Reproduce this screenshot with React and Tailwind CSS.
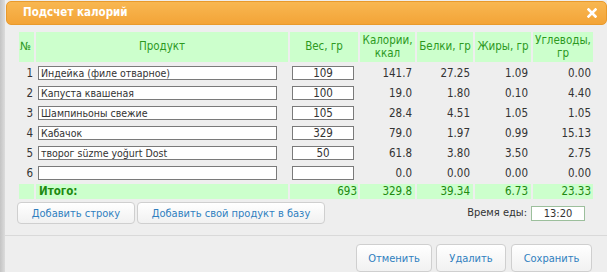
import React from "react";

const rows = [
  { n: 1, name: "Индейка (филе отварное)", w: "109", k: "141.7", b: "27.25", f: "1.09", c: "0.00" },
  { n: 2, name: "Капуста квашеная", w: "100", k: "19.0", b: "1.80", f: "0.10", c: "4.40" },
  { n: 3, name: "Шампиньоны свежие", w: "105", k: "28.4", b: "4.51", f: "1.05", c: "1.05" },
  { n: 4, name: "Кабачок", w: "329", k: "79.0", b: "1.97", f: "0.99", c: "15.13" },
  { n: 5, name: "творог süzme yoğurt Dost", w: "50", k: "61.8", b: "3.80", f: "3.50", c: "2.75" },
  { n: 6, name: "", w: "", k: "0.0", b: "0.00", f: "0.00", c: "0.00" },
];

function Btn({ children, className = "" }) {
  return (
    <button
      className={
        "rounded-[4px] border border-[#cfcfcf] bg-gradient-to-b from-[#ffffff] to-[#f1f1f1] text-[#2f7fbf] leading-none " +
        className
      }
    >
      {children}
    </button>
  );
}

export default function App() {
  return (
    <div
      className="w-[607px] h-[272px] flex overflow-hidden bg-[#eeeeee] text-[#333333]"
      style={{ fontFamily: '"DejaVu Sans Condensed", "DejaVu Sans", sans-serif' }}
    >
      <div className="w-[5px] h-full bg-gradient-to-r from-[#c4c4c4] to-[#dcdcdc] shrink-0" />
      <div className="flex-1 flex flex-col">
        <div className="mt-[1px] ml-[1px] h-[25px] rounded-[5px] border border-[#e99a2c] bg-gradient-to-b from-[#f8b751] to-[#f3a437] flex items-center justify-between pl-[16px] pr-[9px]">
          <span className="text-white font-bold text-[11.5px]">Подсчет калорий</span>
          <svg width="10" height="10" viewBox="0 0 10 10">
            <path d="M1.5 1.5 L8.5 8.5 M8.5 1.5 L1.5 8.5" stroke="#ffffff" strokeWidth="2.6" strokeLinecap="square" />
          </svg>
        </div>

        <div className="pl-[12px] mt-[5px]">
          <table className="table-fixed border-separate border-spacing-[2px] text-[11.5px]">
            <thead>
              <tr className="text-[#2d9a1f] h-[30px]">
                <th className="w-[15px] bg-[#ccffcc] font-normal text-left pl-[1px]">№</th>
                <th className="w-[252px] bg-[#ccffcc] font-normal">Продукт</th>
                <th className="w-[68px] bg-[#ccffcc] font-normal">Вес, гр</th>
                <th className="w-[55px] bg-[#ccffcc] font-normal leading-[13px]">Калории,<br />ккал</th>
                <th className="w-[56px] bg-[#ccffcc] font-normal">Белки, гр</th>
                <th className="w-[56px] bg-[#ccffcc] font-normal">Жиры, гр</th>
                <th className="w-[60px] bg-[#ccffcc] font-normal leading-[13px]">Углеводы,<br />гр</th>
              </tr>
            </thead>
            <tbody>
              {rows.map((r) => (
                <tr key={r.n} className="h-[18px] leading-[14px]">
                  <td className="text-right pr-[1px] p-0">{r.n}</td>
                  <td className="p-0 pl-[2px]">
                    <div className="w-[239px] h-[14px] border border-[#7a7a7a] bg-white text-[10.5px] leading-[12px] pl-[2px] whitespace-nowrap overflow-hidden">
                      {r.name}
                    </div>
                  </td>
                  <td className="p-0 pl-[2px]">
                    <div className="w-[62px] h-[14px] border border-[#7a7a7a] bg-white leading-[12px] text-center">
                      {r.w}
                    </div>
                  </td>
                  <td className="p-0 pr-[3px] text-right">{r.k}</td>
                  <td className="p-0 pr-[3px] text-right">{r.b}</td>
                  <td className="p-0 pr-[3px] text-right">{r.f}</td>
                  <td className="p-0 pr-[2px] text-right">{r.c}</td>
                </tr>
              ))}
              <tr className="h-[15px] text-[#208a10] leading-[13px]">
                <td className="bg-[#ccffcc] p-0"></td>
                <td className="bg-[#ccffcc] p-0 pl-[3px] font-bold">Итого:</td>
                <td className="bg-[#ccffcc] p-0 pr-[1px] text-right">693</td>
                <td className="bg-[#ccffcc] p-0 pr-[3px] text-right">329.8</td>
                <td className="bg-[#ccffcc] p-0 pr-[3px] text-right">39.34</td>
                <td className="bg-[#ccffcc] p-0 pr-[3px] text-right">6.73</td>
                <td className="bg-[#ccffcc] p-0 pr-[2px] text-right">23.33</td>
              </tr>
            </tbody>
          </table>
        </div>

        <div className="flex items-center pl-[12px] pr-[22px] mt-[1px] h-[22px] text-[11px]">
          <Btn className="w-[118px] h-[22px]">Добавить строку</Btn>
          <Btn className="ml-[2px] w-[188px] h-[22px]">Добавить свой продукт в базу</Btn>
          <div className="flex-1" />
          <span className="mr-[4px]">Время еды:</span>
          <div className="w-[54px] h-[15px] border border-[#9cbf9c] bg-white leading-[13px] text-center">13:20</div>
        </div>

        <div className="mt-[11px] h-[1px] bg-[#d9d9d9]" />

        <div className="flex justify-end pr-[15px] mt-[8px] text-[11px]">
          <Btn className="w-[76px] h-[28px]">Отменить</Btn>
          <Btn className="ml-[4px] w-[70px] h-[28px]">Удалить</Btn>
          <Btn className="ml-[5px] w-[81px] h-[28px]">Сохранить</Btn>
        </div>
      </div>
    </div>
  );
}
